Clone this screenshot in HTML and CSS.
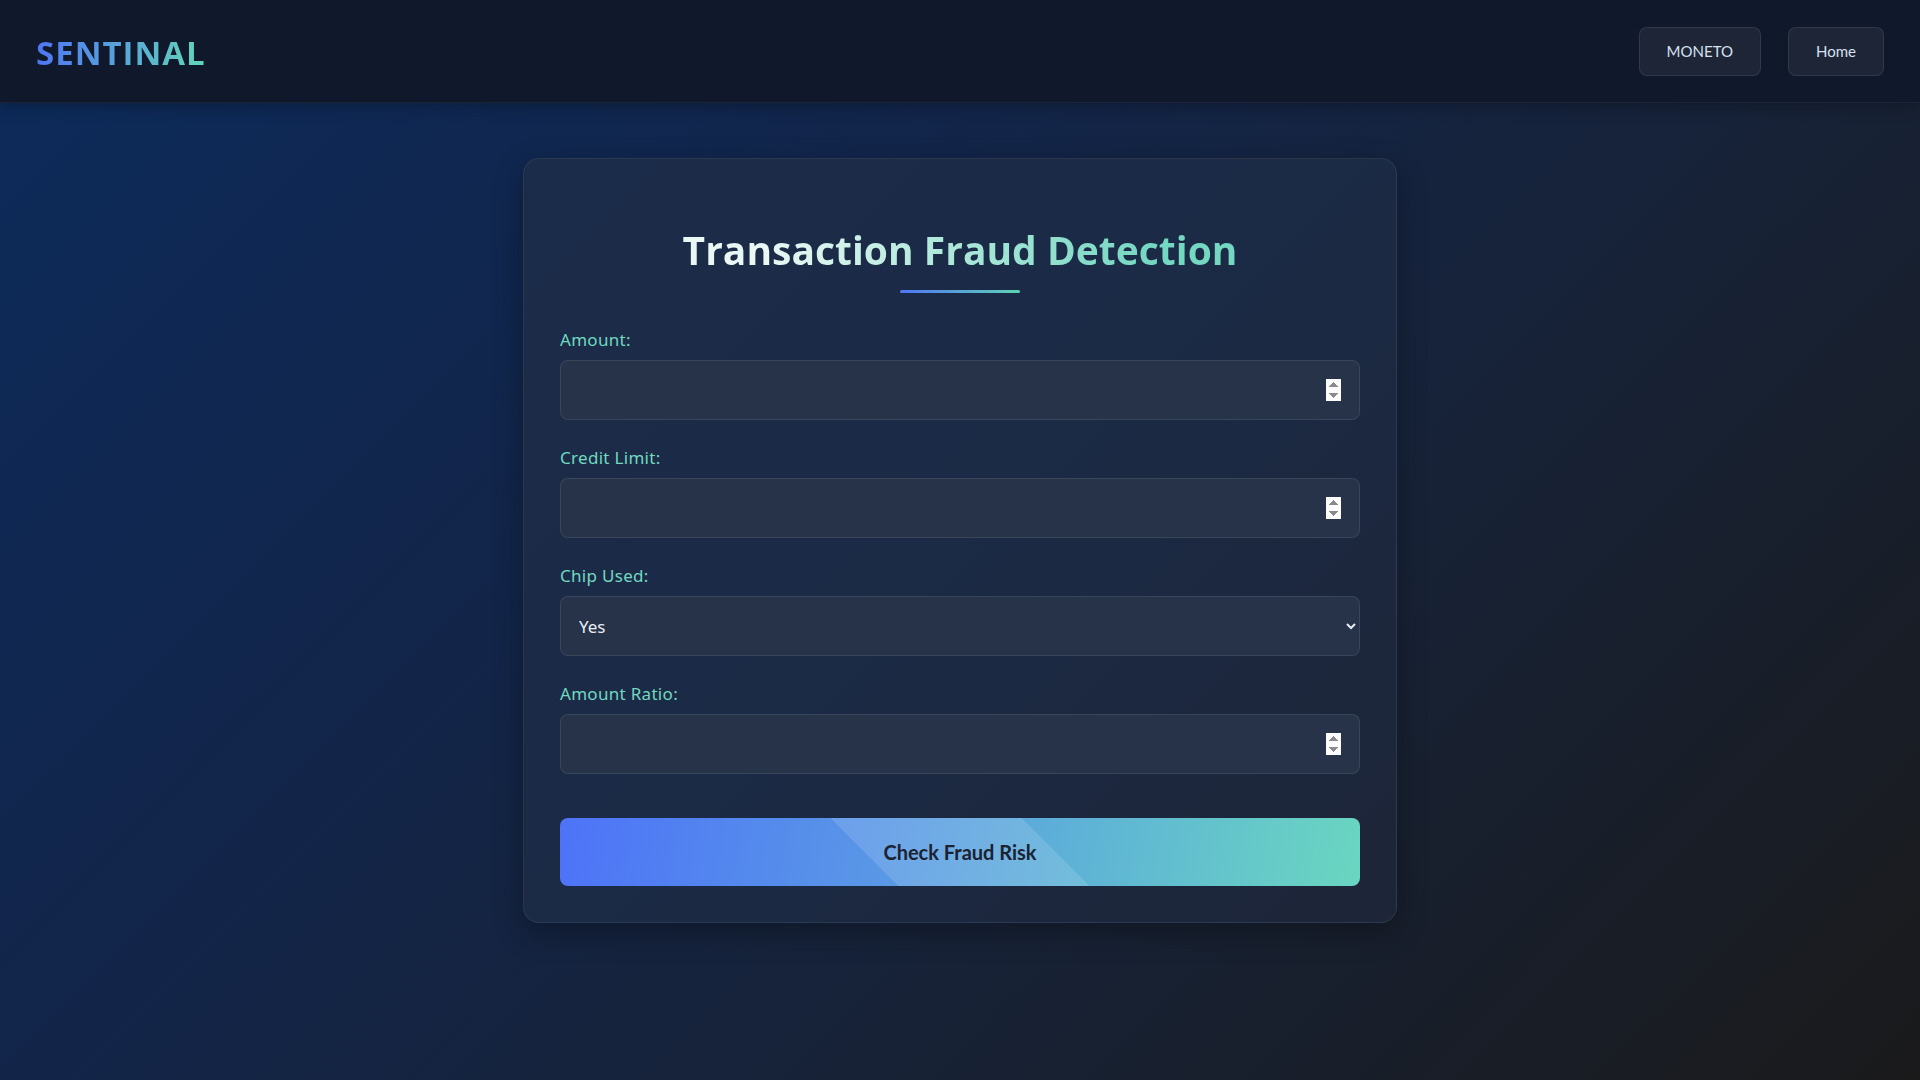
FILE: index.html
```html
<!DOCTYPE html>
<html lang="en">
<head>
<meta charset="utf-8">
<title>Sentinal - Transaction Fraud Detection</title>
<link rel="stylesheet" href="styles.css">
</head>
<body>
<header class="topbar">
  <div class="logo">SENTINAL</div>
  <nav class="nav">
    <button class="nav-btn" type="button">MONETO</button>
    <button class="nav-btn" type="button">Home</button>
  </nav>
</header>
<main class="main">
  <section class="card">
    <h1 class="title">Transaction Fraud Detection</h1>
    <div class="title-bar"></div>
    <form class="form">
      <div class="field">
        <label class="label" for="amount">Amount:</label>
        <input class="input" id="amount" type="number">
      </div>
      <div class="field">
        <label class="label" for="credit">Credit Limit:</label>
        <input class="input" id="credit" type="number">
      </div>
      <div class="field">
        <label class="label" for="chip">Chip Used:</label>
        <select class="input select" id="chip">
          <option>Yes</option>
          <option>No</option>
        </select>
      </div>
      <div class="field">
        <label class="label" for="ratio">Amount Ratio:</label>
        <input class="input" id="ratio" type="number">
      </div>
      <button class="submit" type="button">Check Fraud Risk</button>
    </form>
  </section>
</main>
</body>
</html>
```

FILE: styles.css
```css
* { box-sizing: border-box; }
html, body { margin: 0; padding: 0; }
body {
  min-height: 1080px;
  font-family: "Noto Sans", "Open Sans", sans-serif;
  color: #e2e8f0;
  background: linear-gradient(135deg, #0c2b5b 0%, #12254a 35%, #172236 65%, #1a1a1b 100%);
}
.topbar {
  height: 103px;
  display: flex;
  align-items: center;
  justify-content: space-between;
  padding: 0 36px 0 36px;
  background: #10182b;
  border-bottom: 1px solid rgba(255,255,255,0.05);
  box-shadow: 0 4px 14px rgba(0,0,0,0.25);
}
.logo {
  font-family: "Open Sans", "Noto Sans", sans-serif;
  font-weight: 700;
  font-size: 33px;
  letter-spacing: 1px;
  background: linear-gradient(90deg, #4f75f6 0%, #62d6b8 100%);
  -webkit-background-clip: text;
  background-clip: text;
  color: transparent;
  margin-top: 2px;
}
.nav { display: flex; gap: 27px; }
.nav-btn {
  font-family: "Lato", sans-serif;
  font-size: 15px;
  color: #d6e0ef;
  background: #1d2536;
  border: 1px solid rgba(255,255,255,0.09);
  border-radius: 8px;
  height: 49px;
  padding: 0 27px;
  cursor: pointer;
}
.main {
  display: flex;
  justify-content: center;
  padding-top: 55px;
}
.card {
  width: 874px;
  padding: 36px;
  border-radius: 16px;
  background: linear-gradient(135deg, #1b2c4a 0%, #1b2a45 50%, #1d2537 100%);
  border: 1px solid rgba(255,255,255,0.07);
  box-shadow: 0 10px 30px rgba(0,0,0,0.3);
}
.title {
  margin: 27px auto 0;
  width: max-content;
  text-align: center;
  font-family: "Open Sans", "Noto Sans", sans-serif;
  font-weight: 700;
  font-size: 39px;
  line-height: 56px;
  color: transparent;
  background-image: linear-gradient(90deg, #eaf8f5 15%, #b3e9dc 45%, #74d7c1 85%);
  -webkit-background-clip: text;
  background-clip: text;
}
.title-bar {
  width: 120px;
  height: 3px;
  margin: 12px auto 35px;
  background: linear-gradient(90deg, #4f75f6, #5fd3b5);
  border-radius: 2px;
}
.form { display: flex; flex-direction: column; }
.field { display: flex; flex-direction: column; margin-bottom: 26px; }
.label {
  font-size: 17px;
  line-height: 24px;
  color: #72d8c0;
  letter-spacing: 0.3px;
  margin-bottom: 8px;
}
.input {
  height: 60px;
  width: 100%;
  padding: 0 18px;
  font-family: "Noto Sans", sans-serif;
  font-size: 17px;
  color: #e8edf5;
  background: #263349;
  border: 1px solid rgba(255,255,255,0.09);
  border-radius: 8px;
  outline: none;
}
.input::-webkit-inner-spin-button,
.input::-webkit-outer-spin-button {
  opacity: 1;
}
.select { padding-left: 14px; padding-right: 10px; }
.submit {
  margin-top: 18px;
  height: 68px;
  width: 100%;
  border: none;
  border-radius: 8px;
  font-family: "Lato", sans-serif;
  font-weight: 700;
  font-size: 20px;
  color: #1b2232;
  cursor: pointer;
  background:
    linear-gradient(45deg, transparent 39%, rgba(255,255,255,0.13) 39%, rgba(255,255,255,0.13) 61%, transparent 61%),
    linear-gradient(100deg, #4d73f8 0%, #5997e6 40%, #5eb3d6 65%, #6ad6c0 100%);
}
```
